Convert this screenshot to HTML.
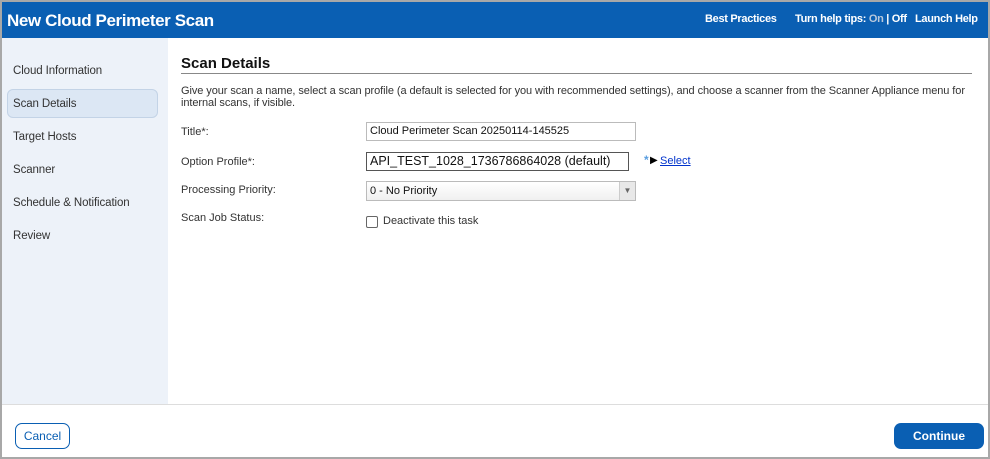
<!DOCTYPE html>
<html><head><meta charset="utf-8"><style>
*{box-sizing:border-box;margin:0;padding:0}
body{width:990px;height:459px;overflow:hidden;background:#fff;font-family:"Liberation Sans",Arial,sans-serif;color:#333}
.frame{position:absolute;left:0;top:0;width:990px;height:459px;border:2px solid #a8a8a8}
.hdr{position:absolute;left:2px;top:2px;width:986px;height:36px;background:#0a5fb3;color:#fff}
.hdr h1{position:absolute;left:5px;top:9px;font-size:17px;font-weight:bold;letter-spacing:-0.4px}
.hdr .r{position:absolute;top:11px;font-size:11px;font-weight:bold;letter-spacing:-0.3px;white-space:nowrap}
.side{position:absolute;left:2px;top:38px;width:166px;height:366px;background:#edf2f9}
.side div{position:absolute;left:11px;font-size:11.5px;color:#333;letter-spacing:-0.1px}
.sel{position:absolute;width:151px;height:29px;background:#dce7f4;border:1px solid #c3d3e6;border-radius:6px}
h2{position:absolute;left:181px;top:55px;font-size:15px;font-weight:bold;color:#111}
.rule{position:absolute;left:181px;top:73px;width:791px;height:1px;background:#888}
.desc{position:absolute;left:181px;top:85px;font-size:11px;line-height:12px;color:#333;width:800px;letter-spacing:-0.08px}
.lbl{position:absolute;left:181px;font-size:11px;color:#333}
.inp{position:absolute;left:366px;border:1px solid #bbb;background:#fff;font-size:11px;padding-left:3px;color:#111}
.foot{position:absolute;left:2px;top:404px;width:986px;height:1px;background:#ddd}
.btn{position:absolute;border-radius:7px;font-size:12px;font-weight:bold;text-align:center}
</style></head><body>
<div class="frame"></div>
<div class="hdr"><h1>New Cloud Perimeter Scan</h1>
<span class="r" style="left:703px">Best Practices</span>
<span class="r" style="left:793px">Turn help tips: <span style="color:#b9c9dc">On</span> | Off</span>
<span class="r" style="left:913px">Launch Help</span></div>
<div class="side">
<div style="top:27px">Cloud Information</div>
<div class="sel" style="left:5px;top:51px"></div>
<div style="top:60px">Scan Details</div>
<div style="top:93px">Target Hosts</div>
<div style="top:126px">Scanner</div>
<div style="top:159px">Schedule &amp; Notification</div>
<div style="top:192px">Review</div>
</div>
<h2>Scan Details</h2><div class="rule"></div>
<div class="desc">Give your scan a name, select a scan profile (a default is selected for you with recommended settings), and choose a scanner from the Scanner Appliance menu for<br>internal scans, if visible.</div>
<div class="lbl" style="top:126px">Title*:</div>
<div class="lbl" style="top:156px">Option Profile*:</div>
<div class="lbl" style="top:184px">Processing Priority:</div>
<div class="lbl" style="top:212px">Scan Job Status:</div>
<div class="inp" style="top:122px;width:270px;height:19px;line-height:17px">Cloud Perimeter Scan 20250114-145525</div>
<div class="inp" style="top:152px;width:263px;height:19px;line-height:17px;border-color:#555;font-size:12.5px">API_TEST_1028_1736786864028 (default)</div>
<div style="position:absolute;left:644px;top:153px;font-size:12px;font-weight:bold;color:#5a9ee0">*</div>
<div style="position:absolute;left:650px;top:155px;font-size:10px;color:#000">&#9654;</div>
<div style="position:absolute;left:660px;top:155px;font-size:11px;color:#0033cc;text-decoration:underline">Select</div>
<div class="inp" style="top:181px;width:270px;height:20px;line-height:18px;background:linear-gradient(#fff,#f0f0f0)">0 - No Priority
<span style="position:absolute;right:0;top:0;width:16px;height:18px;border-left:1px solid #ccc;background:#e8e8e8;font-size:8px;text-align:center;color:#666">&#9660;</span></div>
<div style="position:absolute;left:366px;top:216px;width:12px;height:12px;border:1px solid #666;border-radius:2px;background:#fff"></div>
<div class="lbl" style="left:383px;top:215px">Deactivate this task</div>
<div class="foot"></div>
<div class="btn" style="left:15px;top:423px;width:55px;height:26px;border:1px solid #0a5fb3;color:#0a5fb3;line-height:24px;font-weight:normal">Cancel</div>
<div class="btn" style="left:894px;top:423px;width:90px;height:26px;background:#0a5fb3;color:#fff;line-height:26px">Continue</div>
</body></html>
